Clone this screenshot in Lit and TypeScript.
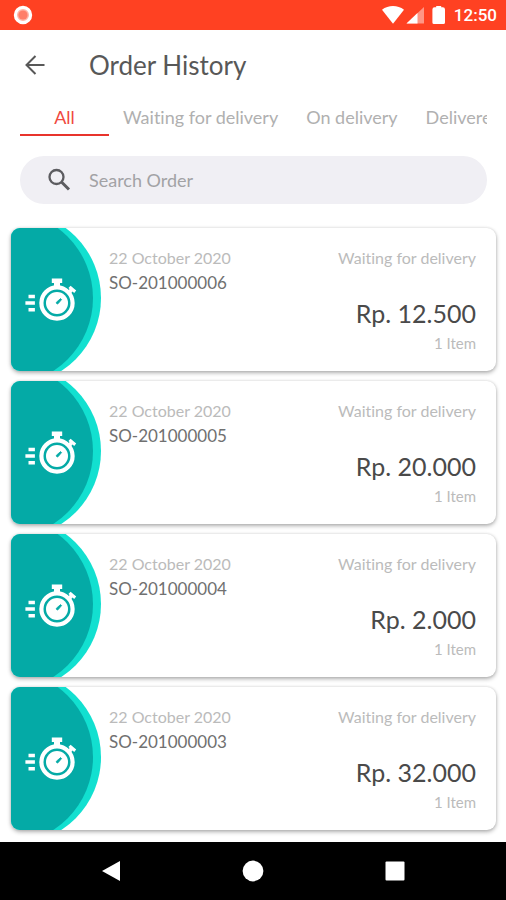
import { LitElement, html, css, svg } from "lit";
import { customElement, property, state } from "lit/decorators.js";
import { classMap } from "lit/directives/class-map.js";

interface Order {
  id: string;
  date: string;
  status: string;
  total: string;
  items: string;
}

const TABS = ["All", "Waiting for delivery", "On delivery", "Delivered"];

const ORDERS: Order[] = [
  { id: "SO-201000006", date: "22 October 2020", status: "Waiting for delivery", total: "Rp. 12.500", items: "1 Item" },
  { id: "SO-201000005", date: "22 October 2020", status: "Waiting for delivery", total: "Rp. 20.000", items: "1 Item" },
  { id: "SO-201000004", date: "22 October 2020", status: "Waiting for delivery", total: "Rp. 2.000", items: "1 Item" },
  { id: "SO-201000003", date: "22 October 2020", status: "Waiting for delivery", total: "Rp. 32.000", items: "1 Item" },
];

// Stopwatch with speed lines, centred on the dial.
const stopwatch = svg`
  <g fill="#fff">
    <circle cx="46" cy="75" r="15.6" fill="none" stroke="#fff" stroke-width="4.2"/>
    <circle cx="46" cy="75" r="11"/>
    <path d="M40.800 50.500h10.400v4.500h-2.200v4h-6v-4h-2.200z"/>
    <path d="M59.600 57.700l5.600 4.800-2 2.400-1.700-1.400-2.300 2.800-2.900-2.500 2.300-2.800-1.200-1z"/>
    <path d="M17.500 66.700h6.400v3.600h-6.400zM14.400 73.300h9.500v3.400h-9.500zM17.500 80.100h6.400v3.500h-6.400z"/>
    <path d="M45.400 74.200l4.200-3.600 1 1-3.600 4.200a1.200 1.200 0 0 1-1.600-1.600z" fill="#04aaa6" stroke="#04aaa6" stroke-width=".8"/>
  </g>`;

@customElement("order-card")
export class OrderCard extends LitElement {
  @property({ attribute: false }) order!: Order;

  static styles = css`
    :host {
      display: block;
    }
    .card {
      display: flex;
      min-height: 143px;
      background: #fff;
      border-radius: 9px;
      overflow: hidden;
      box-shadow: 0 2px 4px rgba(0, 0, 0, 0.3), 0 0 3px rgba(0, 0, 0, 0.12);
    }
    .badge {
      flex: none;
      width: 91px;
      height: 143px;
    }
    .body {
      flex: 1;
      display: flex;
      justify-content: space-between;
      padding: 17px 20px 16px 7px;
    }
    .left,
    .right {
      display: flex;
      flex-direction: column;
      line-height: 25px;
      font-size: 16px;
      color: #bbb;
    }
    .right {
      align-items: flex-end;
    }
    .id {
      font-size: 17px;
      color: #707070;
    }
    .total {
      margin-top: 25px;
      line-height: 36px;
      font-size: 25px;
      color: #4a4a4a;
    }
    .items {
      line-height: 24px;
      font-size: 15px;
    }
  `;

  render() {
    const o = this.order;
    return html`
      <article class="card">
        <svg class="badge" viewBox="0 0 91 143" aria-hidden="true">
          <circle cx="3" cy="70" r="87" fill="#12e0d0" />
          <circle cx="-5" cy="70" r="87" fill="#04aaa6" />
          ${stopwatch}
        </svg>
        <div class="body">
          <div class="left">
            <span>${o.date}</span>
            <span class="id">${o.id}</span>
          </div>
          <div class="right">
            <span>${o.status}</span>
            <span class="total">${o.total}</span>
            <span class="items">${o.items}</span>
          </div>
        </div>
      </article>
    `;
  }
}

@customElement("app-root")
export class AppRoot extends LitElement {
  @state() private active = 0;

  static styles = css`
    :host {
      display: flex;
      flex-direction: column;
      min-height: 100vh;
      background: #fff;
      font-family: Lato, "Open Sans", sans-serif;
      font-weight: 400;
      font-variant-ligatures: none;
    }
    * {
      box-sizing: border-box;
    }
    button {
      border: 0;
      padding: 0;
      background: none;
      font: inherit;
      font-variant-ligatures: none;
      cursor: pointer;
    }
    svg {
      display: block;
    }
    .status {
      display: flex;
      align-items: center;
      height: 30px;
      padding: 0 9px 0 13px;
      background: #ff4122;
      color: #fff;
      font: 500 17px/30px Roboto, sans-serif;
    }
    .signals {
      margin-left: auto;
      margin-right: 8px;
    }
    .header {
      display: flex;
      align-items: center;
      height: 70px;
      padding: 0 20px;
    }
    .back {
      padding: 3px;
      margin-right: 39px;
    }
    .title {
      margin: 0;
      font-size: 26px;
      line-height: 32px;
      font-weight: 400;
      color: #585858;
    }
    .tabs {
      display: flex;
      margin: 0 19px 0 20px;
      overflow: hidden;
    }
    .tab {
      flex: none;
      min-width: 89px;
      height: 36px;
      padding: 0 14px;
      border-bottom: 2px solid transparent;
      line-height: 34px;
      font-size: 18px;
      white-space: nowrap;
      color: #b0b0b0;
    }
    .tab.active {
      color: #f0493f;
      border-color: #e8342c;
    }
    .search {
      display: flex;
      align-items: center;
      gap: 16px;
      height: 48px;
      margin: 20px 19px 0 20px;
      padding: 0 25px;
      border-radius: 24px;
      background: #f0eff4;
    }
    .search input {
      flex: 1;
      min-width: 0;
      border: 0;
      padding: 0;
      outline: 0;
      background: none;
      font: inherit;
      font-size: 18px;
      line-height: 24px;
      color: #585858;
    }
    .search input::placeholder {
      color: #a2a2a5;
      opacity: 1;
    }
    .list {
      flex: 1;
      display: flex;
      flex-direction: column;
      gap: 10px;
      padding: 24px 10px 10px 11px;
    }
    .nav {
      display: flex;
      justify-content: space-around;
      align-items: center;
      height: 58px;
      padding: 0 40px;
      background: #000;
    }
  `;

  render() {
    return html`
      <div class="status">
        <svg width="20" height="20" viewBox="0 0 20 20" aria-hidden="true">
          <circle cx="10" cy="10" r="7.600" fill="#ffb5a8" stroke="#fff" stroke-width="3.200" />
          <circle cx="10" cy="10" r="4.600" fill="#ff7f6a" />
        </svg>
        <svg class="signals" width="64" height="20" viewBox="0 0 64 20" fill="#fff" aria-hidden="true">
          <path d="M0 4.800C6.400-0.200 15.600-0.200 22 4.800L11 18.800z" />
          <path d="M42 2v16.500H24.500z" fill-opacity=".45" />
          <path d="M35.500 8v10.500H24.500z" />
          <path d="M54.200 1h5v1.200h1.600q2.200 0 2.200 2.200v13q0 1.600-1.600 1.600h-9.400q-1.600 0-1.600-1.600v-13q0-2.200 2.200-2.200h1.600z" />
        </svg>
        <span>12:50</span>
      </div>

      <header class="header">
        <button class="back" aria-label="Back">
          <svg width="24" height="24" viewBox="0 0 24 24" fill="none" stroke="#585858" stroke-width="2" aria-hidden="true">
            <path d="M21.500 12H4M12.500 3L3.500 12l9 9" />
          </svg>
        </button>
        <h1 class="title">Order History</h1>
      </header>

      <div class="tabs" role="tablist">
        ${TABS.map(
          (label, i) => html`<button
            role="tab"
            aria-selected=${i === this.active ? "true" : "false"}
            class=${classMap({ tab: true, active: i === this.active })}
            @click=${() => (this.active = i)}
          >${label}</button>`
        )}
      </div>

      <label class="search">
        <svg width="28" height="28" viewBox="0 0 28 28" fill="none" stroke="#5c5c60" aria-hidden="true">
          <circle cx="11.500" cy="11" r="7" stroke-width="2.300" />
          <path d="M16.500 16L24 23.500" stroke-width="3" />
        </svg>
        <input type="text" placeholder="Search Order" aria-label="Search Order" />
      </label>

      <main class="list">
        ${ORDERS.map((o) => html`<order-card .order=${o}></order-card>`)}
      </main>

      <nav class="nav">
        <button aria-label="Back">
          <svg width="22" height="22" viewBox="0 0 22 22" fill="#fff"><path d="M20 1v20L2 11z" /></svg>
        </button>
        <button aria-label="Home">
          <svg width="22" height="22" viewBox="0 0 22 22" fill="#fff"><circle cx="11" cy="11" r="10.400" /></svg>
        </button>
        <button aria-label="Recent apps">
          <svg width="22" height="22" viewBox="0 0 22 22" fill="#fff"><rect x="1.500" y="1.500" width="19" height="19" rx="1" /></svg>
        </button>
      </nav>
    `;
  }
}
